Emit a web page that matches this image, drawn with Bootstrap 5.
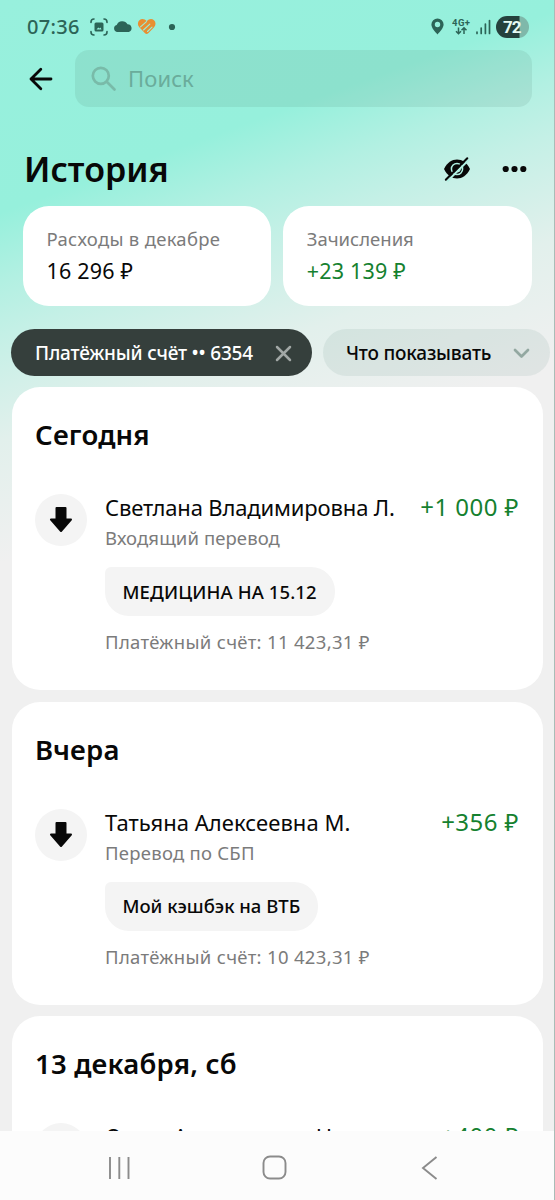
<!DOCTYPE html>
<html lang="ru">
<head>
<meta charset="utf-8">
<meta name="viewport" content="width=device-width, initial-scale=1">
<title>История</title>
<link href="https://cdn.jsdelivr.net/npm/bootstrap@5.3.0/dist/css/bootstrap.min.css" rel="stylesheet">
<style>
  html, body { height: 100%; }
  body { font-family: "Noto Sans", "Open Sans", sans-serif; color: #080808; background: #f0f0f0; }
  .screen { height: 1200px; border-right: 1px solid #a9bcb7;
    background: #f0f0f0 linear-gradient(160deg, #98f0dd 0, #96f0dc 200px, #b2f0e2 265px, #c4f0e6 315px, #e2f0ec 415px, #f0f0f0 530px) no-repeat 0 0 / 100% 620px; }
  .text-nowrap { line-height: 1; }
  .status { height: 50px; padding: 3px 25px 0 27px; color: #2c6457; }
  .clock { font-size: 20px; letter-spacing: .3px; font-weight: 500; }
  .search-row { height: 57px; padding: 0 22px 0 28px; gap: 22px; }
  .search-box { height: 57px; border-radius: 14px; background: rgba(60,110,95,.11); color: #6aac9b; padding-left: 16px; font-size: 22px; letter-spacing: .1px; gap: 11px; }
  .head-row { height: 99px; padding: 25px 27px 0 24px; }
  .head-row h1 { font-size: 34px; font-weight: 600; line-height: 48px; }
  .totals { padding: 0 22.500px 0 23px; gap: 12px; }
  .total { height: 100px; border-radius: 26px; background: #fff; padding: 20px 23px 0 23.500px; }
  .grey { color: #7b7b7b; font-size: 18.5px; line-height: 25px; font-weight: 400; }
  .total .sum { font-size: 21.5px; font-weight: 450; line-height: 28px; margin-top: 6px; letter-spacing: .2px; }
  .green { color: #15812f; }
  .chips { padding: 23px 4px 11px 11px; gap: 11px; }
  .chip { height: 47px; border-radius: 24px; font-size: 19px; font-weight: 500; padding: 1px 20px 0 24px; letter-spacing: -.2px; }
  .chip-dark { width: 301px; background: #353f3c; color: #fff; }
  .chip-light { width: 227px; background: rgba(60,110,95,.09); padding-left: 23px; }
  .day { height: 303px; border-radius: 28px; background: #fff; padding: 29px 24px 0 23px; margin-bottom: 11.5px; }
  .day h2 { font-size: 27.5px; font-weight: 600; line-height: 38px; margin: 0 0 39px; letter-spacing: .2px; }
  .coin { width: 52px; height: 52px; margin: 1px 18px 0 0; background: #f4f4f4; }
  .person { font-size: 22px; line-height: 28px; }
  .amount { font-size: 24px; font-weight: 450; line-height: 28px; letter-spacing: .45px; }
  .note { height: 49px; border-radius: 6px 24px 24px 24px; background: #f4f4f4; font-size: 18.5px; font-weight: 500; padding: 0 18px; margin: 17px 0 13px -.5px; }
  .feed { padding: 0 11px 0 12px; height: 744px; }
  .navkeys { height: 69px; background: #fcfcfc; padding: 4px 117px 0 108px; color: #8b8b8b; margin-right: -1px; }
</style>
</head>
<body>
<div class="screen d-flex flex-column overflow-hidden">
  <div class="status d-flex align-items-center flex-shrink-0">
    <span class="clock text-nowrap">07:36</span>
    <svg style="margin-left:9px" width="20" height="18" viewBox="0 0 20 18" fill="none" stroke="currentColor" stroke-width="1.600" stroke-linecap="round"><path d="M2 4.500V4q0-3 3-3M15 1q3 0 3 3v.5M18 13.500V14q0 3-3 3M5 17q-3 0-3-3v-.5"/><rect x="5.500" y="4.500" width="9" height="9" rx="1.500" fill="currentColor" stroke="none"/><path d="M7.500 11.500l1.800-2 1.200 1 1-1 1 2z" fill="#96f0dc" stroke="none"/></svg>
    <svg style="margin-left:4px" width="20" height="13" viewBox="0 0 20 13" fill="currentColor"><path d="M4 12a3.600 3.600 0 0 1-.3-7A6 6 0 0 1 14.500 4.200 4 4 0 0 1 15.800 12z"/></svg>
    <svg style="margin-left:4px" width="20" height="17" viewBox="0 0 20 17"><path d="M9.800 3.200C12 .5 15 .4 17 2.200s2 5 .1 7.100L11.500 15Q9.500 16.800 7.800 15L2.300 9.300C.4 7.200.4 4 2.400 2.200s5.200-1.700 7.400 1z" fill="#e88f32"/><path d="M3.500 8.800L9.500 3.700M6.500 12L12.800 6.200M10.500 13.500L15 9.200" fill="none" stroke="#96f0dc" stroke-width="1.100" stroke-linecap="round"/></svg>
    <svg style="margin-left:11px" width="8" height="8"><circle cx="4" cy="4" r="3.100" fill="currentColor"/></svg>
    <div class="d-flex align-items-center ms-auto">
      <svg width="13" height="17" viewBox="0 0 13 17" fill="currentColor"><path fill-rule="evenodd" d="M6.500 16.500C4 13.500 .4 10 .4 6.500a6.100 6.100 0 0 1 12.200 0c0 3.500-3.600 7-6.100 10zM6.500 3.800a2.700 2.700 0 1 0 0 5.400 2.700 2.700 0 0 0 0-5.400z"/></svg>
      <svg style="margin-left:8px" width="19" height="19" viewBox="0 0 19 19"><text x="0" y="8.500" font-family="Roboto" font-weight="700" font-size="9.500" fill="currentColor" textLength="18">4G+</text><path d="M6.500 10.500v6M4 14.200l2.500 2.500L9 14.200M12 17v-6M9.500 13.300l2.500-2.500 2.500 2.500" fill="none" stroke="currentColor" stroke-width="1.500"/></svg>
      <svg style="margin-left:4px" width="16" height="16" viewBox="0 0 16 16" stroke="currentColor" stroke-width="1.700" stroke-linecap="round"><path d="M2 13v1.500M6.200 9v5.500M10.400 5v9.500M14.500 1.500v13"/></svg>
      <svg style="margin-left:5px" width="33" height="22" viewBox="0 0 33 22"><path d="M11 0h11a11 11 0 0 1 0 22H11z" fill="#7fb8aa"/><path d="M11 0h12.500v22H11a11 11 0 0 1 0-22z" fill="#25413d"/><text x="7" y="16.800" font-family="Roboto" font-weight="700" font-size="17" fill="#e6faf4" textLength="18.500">72</text></svg>
    </div>
  </div>
  <div class="search-row d-flex align-items-center flex-shrink-0">
    <svg class="flex-shrink-0" width="25" height="24" viewBox="0 0 25 24" fill="none" stroke="#080808" stroke-width="2.800" stroke-linecap="round" stroke-linejoin="round"><path d="M23 12H3M12.800 2.300L3 12l9.800 9.700"/></svg>
    <div class="search-box d-flex align-items-center flex-grow-1">
      <svg width="26" height="26" viewBox="0 0 26 26" fill="none" stroke="#79bba9" stroke-width="2.700" stroke-linecap="round"><circle cx="9.800" cy="9.800" r="8"/><path d="M16 16l7.500 7.500"/></svg>
      <span>Поиск</span>
    </div>
  </div>
  <div class="head-row d-flex align-items-center flex-shrink-0">
    <h1 class="mb-0">История</h1>
    <svg class="ms-auto" width="28" height="26" viewBox="0 0 28 26"><path d="M1 13C4 6.500 9 3.500 14 3.500S24 6.500 27 13C24 19.500 19 22.500 14 22.500S4 19.500 1 13z" fill="#080808"/><circle cx="14" cy="13" r="5.600" fill="none" stroke="#b0f0e2" stroke-width="1.500"/><path d="M4.300 25.200L25.800 3.700" stroke="#b0f0e2" stroke-width="2.200"/><path d="M2.800 23.700L24.300 2.200" stroke="#080808" stroke-width="2" stroke-linecap="round"/><path d="M14.500 15.800q2.800-.3 2.600-3.300" fill="none" stroke="#b0f0e2" stroke-width="1.300"/></svg>
    <svg style="margin-left:31px" width="25" height="8" fill="#080808"><circle cx="3.700" cy="4" r="3.100"/><circle cx="12.500" cy="4" r="3.100"/><circle cx="21.300" cy="4" r="3.100"/></svg>
  </div>
  <div class="totals d-flex flex-shrink-0">
    <div class="total col"><div class="grey" style="letter-spacing:.28px">Расходы в декабре</div><div class="sum">16 296 ₽</div></div>
    <div class="total col"><div class="grey">Зачисления</div><div class="sum green">+23 139 ₽</div></div>
  </div>
  <div class="chips d-flex flex-shrink-0">
    <div class="chip chip-dark d-flex align-items-center justify-content-between flex-shrink-0"><span>Платёжный счёт •• 6354</span>
      <svg width="17" height="17" viewBox="0 0 17 17" stroke="#a2a8a6" stroke-width="2.500" stroke-linecap="round"><path d="M2 2l13 13M15 2L2 15"/></svg></div>
    <div class="chip chip-light d-flex align-items-center justify-content-between flex-shrink-0"><span>Что показывать</span>
      <svg width="17" height="11" viewBox="0 0 17 11" fill="none" stroke="#93a8a1" stroke-width="2.700" stroke-linecap="round" stroke-linejoin="round"><path d="M2 2l6.500 6.500L15 2"/></svg></div>
  </div>
  <div class="feed overflow-hidden flex-shrink-0">
    <section class="day">
      <h2>Сегодня</h2>
      <div class="d-flex">
        <div class="coin rounded-circle d-flex align-items-center justify-content-center flex-shrink-0"><svg width="24" height="28" viewBox="0 0 24 28"><path d="M7.500 2h9v11.500H22L12 25 2 13.500h5.500z" fill="#080808" stroke="#080808" stroke-width="2" stroke-linejoin="round"/></svg></div>
        <div class="flex-grow-1">
          <div class="d-flex justify-content-between"><span class="person" style="letter-spacing:-.14px">Светлана Владимировна Л.</span><span class="amount green">+1 000 ₽</span></div>
          <div class="grey mt-1" style="letter-spacing:.1px">Входящий перевод</div>
          <div class="d-flex"><div class="note d-flex align-items-center" style="letter-spacing:.12px">МЕДИЦИНА НА 15.12</div></div>
          <div class="grey" style="letter-spacing:.32px">Платёжный счёт: 11 423,31 ₽</div>
        </div>
      </div>
    </section>
    <section class="day">
      <h2>Вчера</h2>
      <div class="d-flex">
        <div class="coin rounded-circle d-flex align-items-center justify-content-center flex-shrink-0"><svg width="24" height="28" viewBox="0 0 24 28"><path d="M7.500 2h9v11.500H22L12 25 2 13.500h5.500z" fill="#080808" stroke="#080808" stroke-width="2" stroke-linejoin="round"/></svg></div>
        <div class="flex-grow-1">
          <div class="d-flex justify-content-between"><span class="person" style="letter-spacing:.06px">Татьяна Алексеевна М.</span><span class="amount green">+356 ₽</span></div>
          <div class="grey mt-1" style="letter-spacing:.25px">Перевод по СБП</div>
          <div class="d-flex"><div class="note d-flex align-items-center">Мой кэшбэк на ВТБ</div></div>
          <div class="grey" style="letter-spacing:.32px">Платёжный счёт: 10 423,31 ₽</div>
        </div>
      </div>
    </section>
    <section class="day">
      <h2>13 декабря, сб</h2>
      <div class="d-flex">
        <div class="coin rounded-circle flex-shrink-0"></div>
        <div class="d-flex justify-content-between flex-grow-1"><span class="person" style="letter-spacing:-.1px">Ольга Анатольевна Н.</span><span class="amount green">+400 ₽</span></div>
      </div>
    </section>
  </div>
  <div class="navkeys d-flex align-items-center flex-shrink-0">
    <svg width="23" height="24" viewBox="0 0 23 24" stroke="currentColor" stroke-width="1.900"><path d="M2 1v22M11.300 1v22M20.500 1v22"/></svg>
    <svg style="margin-left:131px" width="25" height="25" viewBox="0 0 25 25" fill="none" stroke="currentColor" stroke-width="1.900"><rect x="1.500" y="1.500" width="22" height="22" rx="6.500"/></svg>
    <svg class="ms-auto" width="17" height="24" viewBox="0 0 17 24" fill="none" stroke="currentColor" stroke-width="1.900"><path d="M15.500 1L2 12l13.500 11"/></svg>
  </div>
</div>
<script src="https://cdn.jsdelivr.net/npm/bootstrap@5.3.0/dist/js/bootstrap.bundle.min.js"></script>
</body>
</html>
